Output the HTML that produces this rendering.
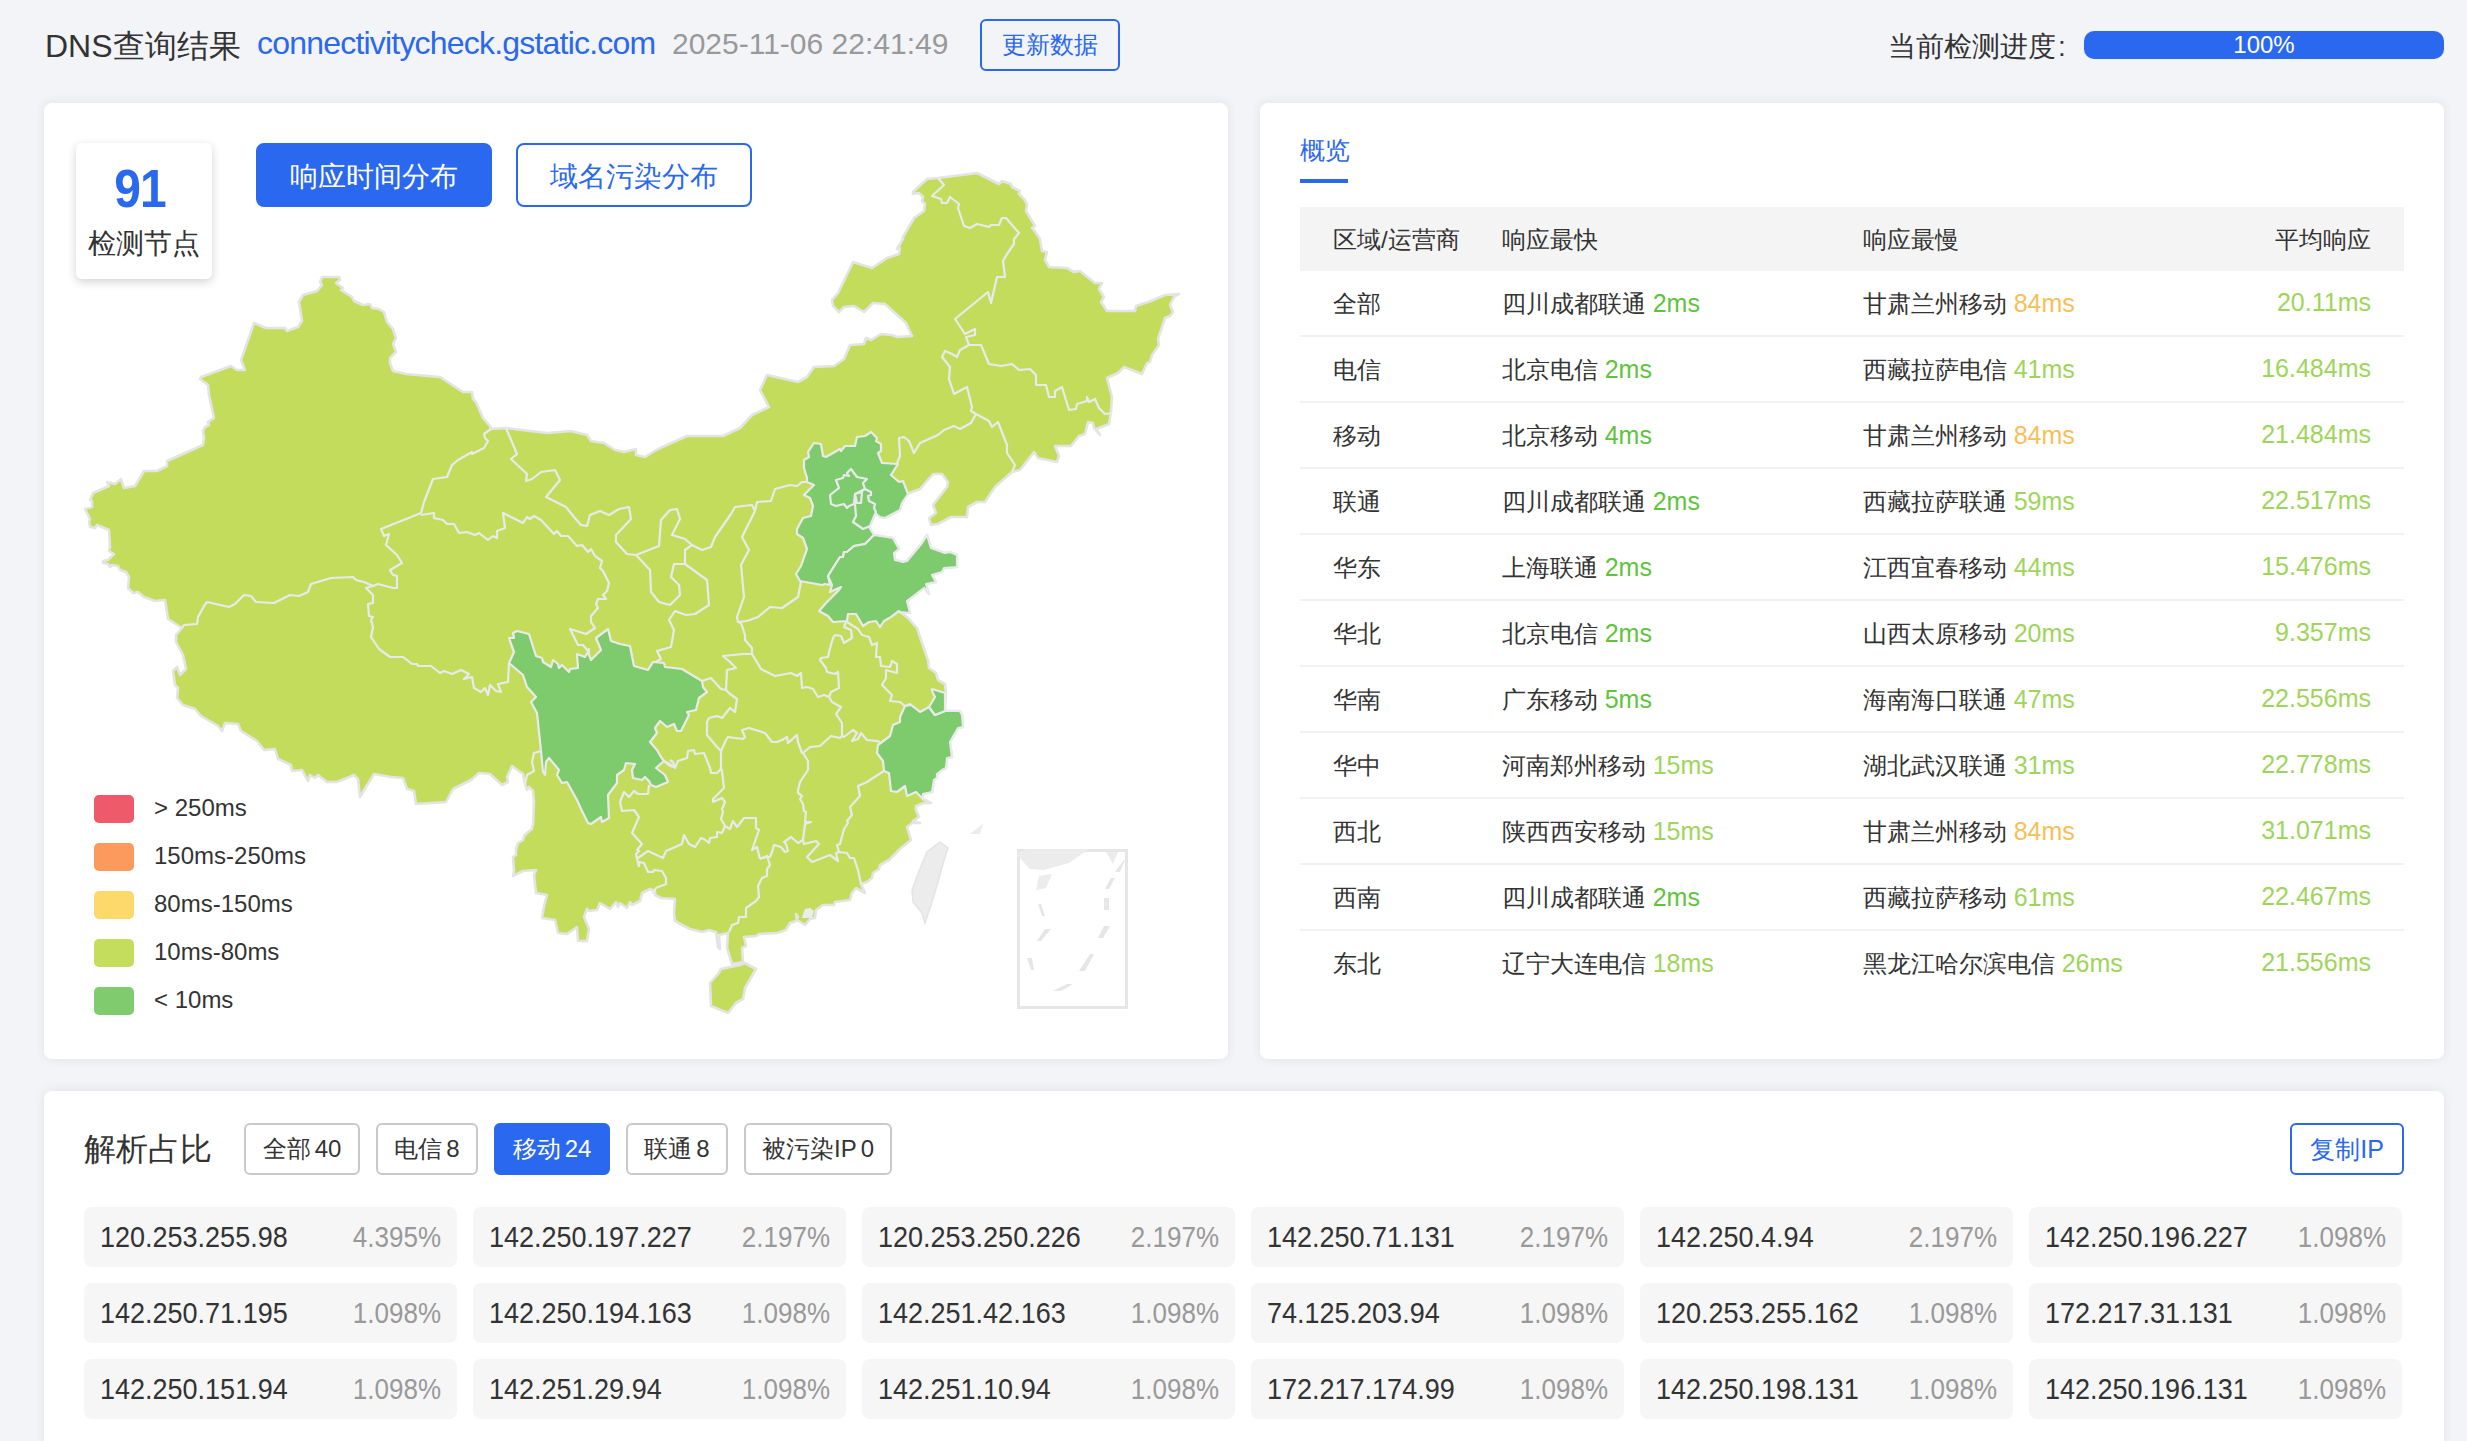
<!DOCTYPE html>
<html><head><meta charset="utf-8">
<style>
*{box-sizing:border-box;margin:0;padding:0}
html,body{width:2467px;height:1441px;overflow:hidden;background:#f3f4f8;font-family:"Liberation Sans",sans-serif;color:#333}
.a{position:absolute;white-space:nowrap}
.card{position:absolute;background:#fff;border-radius:8px;box-shadow:0 0 12px rgba(0,0,0,0.075)}
.blue{color:#2a68ef}
.btn{position:absolute;border:2px solid #2a68ef;border-radius:6px;color:#2a68ef;display:flex;align-items:center;justify-content:center;white-space:nowrap}
.btnf{background:#2a68ef;color:#fff}
.tag{position:absolute;top:1123px;height:52px;border:2px solid #c9c9c9;border-radius:6px;font-size:24px;display:flex;align-items:center;justify-content:center;color:#333;white-space:nowrap}
.tag.on{background:#2a68ef;border-color:#2a68ef;color:#fff}
.ip{position:absolute;width:373px;height:60px;background:#f6f6f6;border-radius:8px}
.ip .l{position:absolute;left:16px;top:15px;font-size:27px;color:#333;white-space:nowrap;transform:scaleY(1.12)}
.ip .r{position:absolute;right:16px;top:15px;font-size:26px;color:#999;white-space:nowrap;transform:scaleY(1.12)}
.row{position:absolute;left:1300px;width:1104px;height:66px;border-bottom:2px solid #f2f2f2}
.row span{position:absolute;top:17px;font-size:24px;white-space:nowrap}
.row b,.row .g2n{font-weight:normal;font-size:25px}
.g1{color:#5ec43c}.g2{color:#9ed55a}.o1{color:#f7c057}
.leg{position:absolute;left:94px;width:40px;height:28px;border-radius:5px}
.legt{position:absolute;left:154px;font-size:24px;color:#333;white-space:nowrap}
</style></head><body>
<!-- header -->
<div class="a" style="left:45px;top:25px;font-size:32px;color:#333">DNS查询结果</div>
<div class="a blue" style="left:257px;top:25px;font-size:32px;letter-spacing:-0.8px">connectivitycheck.gstatic.com</div>
<div class="a" style="left:672px;top:27px;font-size:30px;color:#999">2025-11-06 22:41:49</div>
<div class="btn" style="left:980px;top:19px;width:140px;height:52px;font-size:24px">更新数据</div>
<div class="a" style="left:1888px;top:28px;font-size:28px;color:#333">当前检测进度<span style="margin-left:2px">:</span></div>
<div class="a" style="left:2084px;top:31px;width:360px;height:28px;border-radius:10px;background:#2a68ef;color:#fff;font-size:24px;text-align:center;line-height:28px">100%</div>

<!-- left card -->
<div class="card" style="left:44px;top:103px;width:1184px;height:956px"></div>
<div class="card" style="left:76px;top:143px;width:136px;height:136px;border-radius:6px;box-shadow:0 3px 10px rgba(0,0,0,0.18)"></div>
<div class="a" style="left:72px;top:161px;width:136px;text-align:center;font-size:48px;font-weight:bold;color:#2a68ef;letter-spacing:-1px;transform:scaleY(1.1)">91</div>
<div class="a" style="left:76px;top:225px;width:136px;text-align:center;font-size:28px;color:#333">检测节点</div>
<div class="btn btnf" style="left:256px;top:143px;width:236px;height:64px;font-size:28px;border-radius:8px;padding-top:3px">响应时间分布</div>
<div class="btn" style="left:516px;top:143px;width:236px;height:64px;font-size:28px;border-radius:8px;padding-top:3px">域名污染分布</div>

<!-- MAP -->
<svg id="map" class="a" style="left:0;top:0" width="1240" height="1060" viewBox="0 0 1240 1060">
<polygon points="322,277 339,277 340,280 336,283 343,288 341,290 352,297 354,301 363,305 370,304 372,308 379,309 384,312 387,322 393,329 396,338 393,344 396,352 390,358 390,363 393,371 406,374 440,377 463,392 472,392 473,399 476,402 483,418 490,426 491,429 506,428 547,433 571,431 587,435 591,441 604,443 615,450 624,452 636,449 636,455 645,457 658,449 687,436 723,436 740,428 752,415 769,407 760,390 767,375 798,382 807,377 814,367 834,366 844,359 850,345 864,344 866,338 871,340 881,334 892,335 897,337 912,336 906,323 885,304 873,303 864,312 854,306 844,307 839,312 833,306 832,300 838,293 853,262 872,268 887,258 899,254 900,248 897,249 903,239 903,237 914,218 924,211 925,204 922,201 923,197 919,193 913,194 913,192 927,179 938,178 977,173 999,184 1002,181 1011,184 1012,187 1020,191 1019,194 1024,199 1027,204 1026,211 1035,226 1032,228 1034,230 1040,239 1042,251 1047,252 1045,260 1049,267 1067,268 1074,272 1080,271 1095,283 1102,283 1099,289 1104,297 1101,302 1107,311 1135,311 1136,306 1151,301 1165,295 1179,294 1174,297 1170,305 1173,312 1170,316 1165,318 1158,339 1159,345 1152,355 1150,362 1147,363 1142,374 1124,367 1118,373 1107,378 1112,397 1111,412 1109,424 1096,429 1100,435 1094,428 1093,423 1088,422 1085,434 1079,436 1071,446 1055,446 1059,456 1057,462 1038,458 1034,452 1020,470 1012,472 995,487 985,502 977,502 968,507 967,517 951,517 938,524 931,525 929,518 936,513 933,505 947,487 948,482 942,474 933,474 920,489 907,494 902,503 900,510 885,518 880,517 875,513 869,527 874,535 893,538 899,549 894,553 895,560 903,562 907,561 922,543 927,535 931,548 945,553 950,552 957,555 957,567 944,568 942,572 932,575 936,582 926,584 929,594 924,588 907,601 910,613 900,612 908,618 917,628 921,640 928,660 929,668 936,673 938,680 945,684 946,693 945,706 945,711 960,711 962,715 963,727 958,728 950,742 952,757 947,758 946,768 942,770 937,774 937,778 934,780 932,792 923,794 923,799 931,803 924,803 916,806 916,810 919,817 913,821 920,823 912,823 907,827 911,840 901,848 889,860 880,865 879,869 873,873 872,878 867,882 861,884 865,893 856,888 852,893 850,900 835,902 834,905 823,905 816,910 815,918 810,919 805,925 797,920 796,914 798,917 796,921 790,923 786,930 777,933 759,934 756,936 744,937 746,946 742,948 743,962 732,964 727,948 728,933 719,935 720,949 718,947 716,932 709,930 702,932 690,929 682,925 675,921 674,913 675,899 661,898 655,895 655,891 650,889 642,893 640,901 632,905 630,902 627,908 620,903 618,907 616,902 610,909 600,903 597,910 589,911 587,909 584,917 589,929 587,941 578,941 577,927 567,934 558,933 555,920 542,918 544,906 547,895 536,893 534,875 536,870 523,871 513,876 514,871 513,857 516,855 516,849 518,843 523,840 524,836 528,832 532,829 532,827 533,825 534,802 533,791 529,787 527,790 525,784 523,774 512,766 507,777 508,782 502,785 490,774 479,773 471,780 453,789 446,802 416,804 414,791 407,789 403,778 391,777 374,774 364,790 360,797 358,779 354,775 337,782 327,782 318,775 315,778 310,775 308,781 302,770 292,771 291,765 278,759 275,749 264,750 257,741 241,731 238,724 225,723 222,731 218,726 201,716 195,709 183,705 177,698 178,688 175,685 173,671 177,667 180,675 186,669 183,655 176,642 176,635 182,628 168,619 165,600 155,601 144,597 138,592 133,593 128,588 129,577 126,572 120,570 118,566 112,565 110,567 108,564 103,563 103,561 108,560 114,554 109,551 110,547 109,530 97,525 95,528 90,527 89,522 90,519 85,509 92,507 92,501 90,500 93,493 109,486 107,482 115,484 121,479 124,488 135,486 144,471 157,471 167,466 167,461 203,445 204,438 203,431 205,427 209,425 208,422 214,418 209,395 208,385 200,379 201,377 231,366 237,370 245,370 241,360 254,323 266,328 285,328 287,331 298,327 302,321 299,302 303,295 317,291 322,285 320,282" fill="#c4dc5c" stroke="#e4e4e4" stroke-width="2.6" stroke-linejoin="round"/>
<polygon points="721,969 740,965 745,963 756,969 745,988 743,999 736,1003 728,1013 711,1006 710,983 718,974" fill="#c4dc5c" stroke="#e4e4e4" stroke-width="2.6" stroke-linejoin="round"/>
<polyline points="491,429 484,434 485,438 488,441 484,448 472,454 472,452 458,460 452,465 447,477 433,479 424,502 421,513 381,529 384,536 389,534 386,545 397,555 402,563 390,570 393,575 397,576 397,588 393,588 378,584 373,586 364,582 356,580 353,577 331,578 311,584 308,592 299,596 290,595 274,603 256,602 251,596 244,595 235,604 229,607 207,602 204,606 198,617 197,624 184,625 182,628" fill="none" stroke="#eaeaee" stroke-width="2.2" stroke-linejoin="round"/>
<polyline points="421,515 434,513 434,518 443,520 447,524 454,524 459,533 467,532 475,535 479,533 488,540 493,536 497,538 497,531 505,528 503,513 523,523 527,517 530,519 534,516 541,520 554,534 557,531 561,536 568,536 577,546 582,545 588,552 591,549 595,556 602,561 600,568 603,571 609,583 607,591 603,595 606,599 598,599 596,604 598,608 591,616 591,622 595,628 586,634 570,629 578,645 583,645 588,651 589,649 588,659" fill="none" stroke="#eaeaee" stroke-width="2.2" stroke-linejoin="round"/>
<polyline points="373,586 366,588 373,595 373,603 368,604 369,616 373,617 371,620 373,627 371,637 379,649 390,657 403,657 412,664 417,664 418,666 431,666 440,673 444,671 452,674 461,670 469,674 464,679 472,677 474,688 481,692 485,688 488,695 490,685 496,691 501,692 498,684 508,682 509,663" fill="none" stroke="#eaeaee" stroke-width="2.2" stroke-linejoin="round"/>
<polyline points="506,428 517,454 511,459 527,474 526,481 532,479 541,472 555,470 560,480 546,497 566,507 574,517 581,525 587,526 590,515 600,511 609,515 619,509 629,507 631,519 616,535 616,542 627,554 636,555" fill="none" stroke="#eaeaee" stroke-width="2.2" stroke-linejoin="round"/>
<polyline points="636,555 659,546 661,520 670,510 677,509 680,519 672,535 685,539 692,545 685,550 685,564 674,564 671,577 679,585 680,595 670,605 659,602 651,592 650,570 636,555" fill="none" stroke="#eaeaee" stroke-width="2.2" stroke-linejoin="round"/>
<polyline points="692,545 702,550 711,547 715,537 731,514 735,507 752,505 755,511 757,502 771,501 775,489 790,485 797,486 802,482 806,482" fill="none" stroke="#eaeaee" stroke-width="2.2" stroke-linejoin="round"/>
<polyline points="685,564 707,580 709,605 695,614 686,615 675,611 669,620 674,630 671,647 657,651 661,659 652,664 648,670" fill="none" stroke="#eaeaee" stroke-width="2.2" stroke-linejoin="round"/>
<polyline points="755,511 742,537 749,550 741,565 744,597 737,617 738,622 741,623 745,635 745,640 752,648 752,654" fill="none" stroke="#eaeaee" stroke-width="2.2" stroke-linejoin="round"/>
<polyline points="752,654 743,654 733,655 723,656 730,662 736,668 727,670 726,690" fill="none" stroke="#eaeaee" stroke-width="2.2" stroke-linejoin="round"/>
<polyline points="702,681 711,678 721,689 726,690" fill="none" stroke="#eaeaee" stroke-width="2.2" stroke-linejoin="round"/>
<polyline points="726,690 730,694 737,699 735,712 730,708 722,718 717,716 709,718 707,722 707,735 717,747 721,751" fill="none" stroke="#eaeaee" stroke-width="2.2" stroke-linejoin="round"/>
<polyline points="721,751 721,769 722,771 724,788 713,799 713,802 722,798 725,802 722,809 723,812 721,819 725,826" fill="none" stroke="#eaeaee" stroke-width="2.2" stroke-linejoin="round"/>
<polyline points="721,769 717,773 711,773 710,768 704,753 695,754 694,750 688,751 687,758 678,761 675,768 673,762 670,760" fill="none" stroke="#eaeaee" stroke-width="2.2" stroke-linejoin="round"/>
<polyline points="649,785 648,794 638,794 634,791 629,797 624,792 620,802 622,811 634,810 639,817 632,833 642,844 637,850 639,851 636,854 639,867" fill="none" stroke="#eaeaee" stroke-width="2.2" stroke-linejoin="round"/>
<polyline points="639,867 639,862 644,863 648,872 653,872 654,870 662,871 666,878 666,884 656,888 654,891 652,894" fill="none" stroke="#eaeaee" stroke-width="2.2" stroke-linejoin="round"/>
<polyline points="638,858 648,851 663,858 666,851 682,844 684,835 689,844 695,847 701,838 704,839 709,843 710,838 717,837 717,832 722,833 725,826" fill="none" stroke="#eaeaee" stroke-width="2.2" stroke-linejoin="round"/>
<polyline points="725,826 730,829 733,821 737,827 744,818 756,818 756,828 759,830 752,850 757,847 760,859" fill="none" stroke="#eaeaee" stroke-width="2.2" stroke-linejoin="round"/>
<polyline points="760,859 767,856 770,865 767,869 767,876 762,878 758,886 759,897 756,901 746,908 746,917 739,917 738,923 732,925 729,932" fill="none" stroke="#eaeaee" stroke-width="2.2" stroke-linejoin="round"/>
<polyline points="761,858 767,857 770,857 772,852 774,845 781,847 785,852 788,851 786,844 784,842 791,837 798,843 803,840" fill="none" stroke="#eaeaee" stroke-width="2.2" stroke-linejoin="round"/>
<polyline points="803,840 804,844 816,841 819,844 807,857 812,862 830,855 838,861 836,853 839,852 847,853 850,858 854,858 858,870 861,884" fill="none" stroke="#eaeaee" stroke-width="2.2" stroke-linejoin="round"/>
<polyline points="803,753 808,761 808,770 800,782 798,790 798,793 802,796 800,799 803,804 804,811 806,812 805,822 811,822 805,824 803,840" fill="none" stroke="#eaeaee" stroke-width="2.2" stroke-linejoin="round"/>
<polyline points="721,751 726,740 728,737 743,739 745,737 742,730 749,728 765,733 772,742 777,742 782,740 787,737 788,743 797,735 798,742 802,753 803,753" fill="none" stroke="#eaeaee" stroke-width="2.2" stroke-linejoin="round"/>
<polyline points="842,736 840,738 831,736 820,746 810,747 803,753" fill="none" stroke="#eaeaee" stroke-width="2.2" stroke-linejoin="round"/>
<polyline points="842,736 842,723 836,714 841,707 832,702 829,697" fill="none" stroke="#eaeaee" stroke-width="2.2" stroke-linejoin="round"/>
<polyline points="752,654 761,669 775,676 791,673 797,676 801,673 802,688 807,687 813,689 818,697 824,695 829,697" fill="none" stroke="#eaeaee" stroke-width="2.2" stroke-linejoin="round"/>
<polyline points="738,622 747,621 758,617 770,607 782,608 798,597 801,582" fill="none" stroke="#eaeaee" stroke-width="2.2" stroke-linejoin="round"/>
<polyline points="846,622 844,627 851,630 852,638 844,643 841,636 835,635 833,638 830,648 828,657 821,658 820,660 826,668 827,672 835,674 838,672 839,688 831,692 829,697" fill="none" stroke="#eaeaee" stroke-width="2.2" stroke-linejoin="round"/>
<polyline points="847,622 858,629 862,635 869,637 872,645 877,643 876,657 880,657 881,666 890,667 892,661 897,664 897,673 886,670 886,678 882,685 892,695 890,701 900,702 905,706 910,704 921,713 929,708" fill="none" stroke="#eaeaee" stroke-width="2.2" stroke-linejoin="round"/>
<polyline points="880,742 877,741 867,740 861,733 858,739 852,741 857,733 853,730 844,737 842,736" fill="none" stroke="#eaeaee" stroke-width="2.2" stroke-linejoin="round"/>
<polyline points="884,771 873,778 867,782 858,786 860,796 850,807 852,815 847,821 848,823 844,829 840,844 837,845 839,852" fill="none" stroke="#eaeaee" stroke-width="2.2" stroke-linejoin="round"/>
<polyline points="938,178 944,185 932,196 941,199 942,203 947,203 950,197 959,204 958,208 964,226 970,228 977,224 989,227 991,225 999,225 1002,218 1006,218 1019,233 1014,239 1014,244 1007,254 1003,261 1005,277 997,277 991,303 988,292 955,319 965,334 975,329 975,335 966,337 969,345" fill="none" stroke="#eaeaee" stroke-width="2.2" stroke-linejoin="round"/>
<polyline points="969,345 960,350 957,357 952,354 945,351 942,357 950,367 949,379 954,394 967,387 972,407 971,411 976,414" fill="none" stroke="#eaeaee" stroke-width="2.2" stroke-linejoin="round"/>
<polyline points="969,345 981,345 989,364 1001,366 1012,364 1019,370 1030,369 1036,375 1036,385 1046,385 1049,397 1055,397 1055,391 1062,387 1069,410 1076,409 1077,404 1087,401 1087,397 1089,402 1095,399 1099,408 1105,414 1112,413" fill="none" stroke="#eaeaee" stroke-width="2.2" stroke-linejoin="round"/>
<polyline points="897,463 900,456 899,438 904,437 909,441 914,453 920,443 938,435 944,430 954,426 960,429 971,423 976,414" fill="none" stroke="#eaeaee" stroke-width="2.2" stroke-linejoin="round"/>
<polyline points="976,414 989,421 992,427 998,422 1007,445 1007,453 1015,465 1012,472" fill="none" stroke="#eaeaee" stroke-width="2.2" stroke-linejoin="round"/>
<polyline points="541,751 534,753 532,762 534,771 527,775 525,784" fill="none" stroke="#eaeaee" stroke-width="2.2" stroke-linejoin="round"/>
<polygon points="808,452 814,443 821,444 823,456 826,457 840,449 841,451 845,446 855,446 857,437 865,436 871,432 877,438 876,441 881,444 881,451 878,453 882,463 898,464 891,475 899,482 903,481 908,494 902,503 900,510 885,518 880,517 875,513 869,527 874,535 865,544 854,546 847,552 844,552 843,557 840,557 828,576 830,585 825,584 822,585 800,581 796,574 801,566 807,549 803,538 797,534 797,529 803,518 811,516 813,506 810,498 804,495 814,485 807,482 807,478 804,468 804,460 809,457" fill="#7ecb6e" stroke="#eaeaee" stroke-width="2.2" stroke-linejoin="round"/>
<polygon points="874,535 893,538 899,549 894,553 895,560 903,562 907,561 922,543 927,535 931,548 945,553 950,552 957,555 957,567 944,568 942,572 932,575 936,582 926,584 929,594 924,588 907,601 910,613 900,612 899,611 891,617 884,621 880,627 876,621 869,622 863,626 856,614 848,614 847,621 833,622 828,616 819,611 827,602 838,591 841,587 830,592 832,585 828,576 840,557 843,557 844,552 847,552 854,546 865,544" fill="#7ecb6e" stroke="#eaeaee" stroke-width="2.2" stroke-linejoin="round"/>
<polygon points="509,638 514,638 513,633 517,631 529,634 536,656 542,658 543,662 551,667 553,660 558,664 559,668 562,665 569,672 570,669 578,668 577,654 585,657 588,652 591,660 601,650 596,638 608,629 611,641 620,644 630,646 634,666 648,670 653,662 664,663 665,667 682,669 687,672 702,681 703,687 707,692 699,698 696,710 687,712 689,715 681,731 677,731 674,724 667,727 660,721 655,728 657,733 650,742 657,750 661,757 664,761 670,766 674,767 668,763 664,761 656,768 665,775 668,782 656,787 651,785 649,781 645,777 642,780 633,778 632,770 635,764 626,763 624,770 617,775 617,783 608,795 609,818 602,822 601,817 591,824 588,823 582,811 577,800 567,782 562,783 557,775 559,770 549,758 546,762 545,775 543,772 541,751 537,713 531,702 536,697 527,687 523,675 509,663 514,652 510,641" fill="#7ecb6e" stroke="#eaeaee" stroke-width="2.2" stroke-linejoin="round"/>
<polygon points="878,745 890,736 893,725 900,722 900,717 905,706 911,705 920,712 929,707 935,715 945,711 960,711 962,715 963,727 958,728 950,742 952,757 947,758 946,768 942,770 937,774 937,778 934,780 932,792 923,794 923,799 916,792 907,796 905,786 897,792 891,791 889,773 884,771 883,761 877,753" fill="#7ecb6e" stroke="#eaeaee" stroke-width="2.2" stroke-linejoin="round"/>
<polygon points="932,689 945,693 945,706 945,711 935,715 929,707 935,697 932,691" fill="#7ecb6e" stroke="#eaeaee" stroke-width="2.2" stroke-linejoin="round"/>
<polygon points="851,469 857,477 867,479 863,483 865,489 855,494 854,504 849,506 847,508 844,504 836,506 831,504 830,495 839,488 836,480 843,478 844,475 849,476 847,473" fill="#7ecb6e" stroke="#eaeaee" stroke-width="2.2" stroke-linejoin="round"/>
<polygon points="865,489 871,492 871,495 868,496 869,501 875,504 874,508 876,512 870,526 863,529 853,522 856,516 855,504 855,495" fill="#7ecb6e" stroke="#eaeaee" stroke-width="2.2" stroke-linejoin="round"/>
<polygon points="855,494 862,492 861,503 857,503" fill="#7ecb6e" stroke="#eaeaee" stroke-width="2.2" stroke-linejoin="round"/>
<polygon points="940,842 948,848 945,857 938,882 931,905 925,923 922,913 913,902 912,890 919,871 927,852" fill="#ececec" stroke="#e4e4e4" stroke-width="1.5"/>
<polygon points="803,914 805,909 810,908 814,911 812,918 802,918" fill="#ececec"/>
<polygon points="970,834 983,824 980,834" fill="#ececec"/>
<rect x="1018.5" y="850.5" width="108" height="157" fill="none" stroke="#e6e6e6" stroke-width="3"/>
<polygon points="1017,855 1026,849 1089,849 1069,863 1044,870 1030,869 1019,857" fill="#ececec"/>
<polygon points="1106,852 1118,852 1113,864" fill="#ececec"/>
<polygon points="1039,876 1052,874 1046,888 1036,890" fill="#ececec"/>
<polygon points="1038,904 1041,904 1045,916 1042,916" fill="#e6e6e6"/>
<polygon points="1045,929 1051,929 1041,941 1037,941" fill="#e6e6e6"/>
<polygon points="1027,958 1032,958 1034,970 1031,970" fill="#e6e6e6"/>
<polygon points="1053,991 1067,984 1073,984 1061,991" fill="#e6e6e6"/>
<polygon points="1079,971 1085,971 1094,954 1090,954" fill="#e6e6e6"/>
<polygon points="1098,938 1103,938 1110,926 1104,926" fill="#e6e6e6"/>
<polygon points="1104,898 1109,898 1109,910 1104,910" fill="#e6e6e6"/>
<polygon points="1105,889 1109,889 1115,878 1111,878" fill="#e6e6e6"/>
<polygon points="1115,872 1120,872 1125,860 1124,860" fill="#e6e6e6"/>
</svg>

<!-- legend -->
<div class="leg" style="top:795px;background:#ee5a6a"></div><div class="legt" style="top:794px">&gt; 250ms</div>
<div class="leg" style="top:843px;background:#fc9a5e"></div><div class="legt" style="top:842px">150ms-250ms</div>
<div class="leg" style="top:891px;background:#fdd86b"></div><div class="legt" style="top:890px">80ms-150ms</div>
<div class="leg" style="top:939px;background:#c4dd5c"></div><div class="legt" style="top:938px">10ms-80ms</div>
<div class="leg" style="top:987px;background:#7fcb6e"></div><div class="legt" style="top:986px">&lt; 10ms</div>

<!-- right card -->
<div class="card" style="left:1260px;top:103px;width:1184px;height:956px"></div>
<div class="a blue" style="left:1300px;top:134px;font-size:25px">概览</div>
<div class="a" style="left:1300px;top:179px;width:48px;height:4px;background:#2a68ef"></div>
<div class="a" style="left:1300px;top:207px;width:1104px;height:64px;background:#f4f4f5"></div>
<div class="a" style="left:1333px;top:224px;font-size:24px">区域/运营商</div>
<div class="a" style="left:1502px;top:224px;font-size:24px">响应最快</div>
<div class="a" style="left:1863px;top:224px;font-size:24px">响应最慢</div>
<div class="a" style="left:2271px;top:224px;width:100px;text-align:right;font-size:24px">平均响应</div>
<div id="rows">
<div class="row" style="top:271px;"><span style="left:33px">全部</span><span style="left:202px">四川成都联通 <b class="g1">2ms</b></span><span style="left:563px">甘肃兰州移动 <b class="o1">84ms</b></span><span class="g2" style="right:33px;font-size:25px">20.11ms</span></div>
<div class="row" style="top:337px;"><span style="left:33px">电信</span><span style="left:202px">北京电信 <b class="g1">2ms</b></span><span style="left:563px">西藏拉萨电信 <b class="g2">41ms</b></span><span class="g2" style="right:33px;font-size:25px">16.484ms</span></div>
<div class="row" style="top:403px;"><span style="left:33px">移动</span><span style="left:202px">北京移动 <b class="g1">4ms</b></span><span style="left:563px">甘肃兰州移动 <b class="o1">84ms</b></span><span class="g2" style="right:33px;font-size:25px">21.484ms</span></div>
<div class="row" style="top:469px;"><span style="left:33px">联通</span><span style="left:202px">四川成都联通 <b class="g1">2ms</b></span><span style="left:563px">西藏拉萨联通 <b class="g2">59ms</b></span><span class="g2" style="right:33px;font-size:25px">22.517ms</span></div>
<div class="row" style="top:535px;"><span style="left:33px">华东</span><span style="left:202px">上海联通 <b class="g1">2ms</b></span><span style="left:563px">江西宜春移动 <b class="g2">44ms</b></span><span class="g2" style="right:33px;font-size:25px">15.476ms</span></div>
<div class="row" style="top:601px;"><span style="left:33px">华北</span><span style="left:202px">北京电信 <b class="g1">2ms</b></span><span style="left:563px">山西太原移动 <b class="g2">20ms</b></span><span class="g2" style="right:33px;font-size:25px">9.357ms</span></div>
<div class="row" style="top:667px;"><span style="left:33px">华南</span><span style="left:202px">广东移动 <b class="g1">5ms</b></span><span style="left:563px">海南海口联通 <b class="g2">47ms</b></span><span class="g2" style="right:33px;font-size:25px">22.556ms</span></div>
<div class="row" style="top:733px;"><span style="left:33px">华中</span><span style="left:202px">河南郑州移动 <b class="g2">15ms</b></span><span style="left:563px">湖北武汉联通 <b class="g2">31ms</b></span><span class="g2" style="right:33px;font-size:25px">22.778ms</span></div>
<div class="row" style="top:799px;"><span style="left:33px">西北</span><span style="left:202px">陕西西安移动 <b class="g2">15ms</b></span><span style="left:563px">甘肃兰州移动 <b class="o1">84ms</b></span><span class="g2" style="right:33px;font-size:25px">31.071ms</span></div>
<div class="row" style="top:865px;"><span style="left:33px">西南</span><span style="left:202px">四川成都联通 <b class="g1">2ms</b></span><span style="left:563px">西藏拉萨移动 <b class="g2">61ms</b></span><span class="g2" style="right:33px;font-size:25px">22.467ms</span></div>
<div class="row" style="top:931px;border-bottom:none;"><span style="left:33px">东北</span><span style="left:202px">辽宁大连电信 <b class="g2">18ms</b></span><span style="left:563px">黑龙江哈尔滨电信 <b class="g2">26ms</b></span><span class="g2" style="right:33px;font-size:25px">21.556ms</span></div>
</div>

<!-- bottom card -->
<div class="card" style="left:44px;top:1091px;width:2400px;height:400px"></div>
<div class="a" style="left:84px;top:1128px;font-size:32px;color:#333">解析占比</div>
<div class="tag" style="left:244px;width:116px">全部<span style="margin-left:4px">40</span></div>
<div class="tag" style="left:376px;width:102px">电信<span style="margin-left:4px">8</span></div>
<div class="tag on" style="left:494px;width:116px">移动<span style="margin-left:4px">24</span></div>
<div class="tag" style="left:626px;width:102px">联通<span style="margin-left:4px">8</span></div>
<div class="tag" style="left:744px;width:148px">被污染IP<span style="margin-left:4px">0</span></div>
<div class="btn" style="left:2290px;top:1123px;width:114px;height:52px;font-size:25px">复制IP</div>
<div id="ips">
<div class="ip" style="left:84px;top:1207px"><span class="l">120.253.255.98</span><span class="r">4.395%</span></div>
<div class="ip" style="left:473px;top:1207px"><span class="l">142.250.197.227</span><span class="r">2.197%</span></div>
<div class="ip" style="left:862px;top:1207px"><span class="l">120.253.250.226</span><span class="r">2.197%</span></div>
<div class="ip" style="left:1251px;top:1207px"><span class="l">142.250.71.131</span><span class="r">2.197%</span></div>
<div class="ip" style="left:1640px;top:1207px"><span class="l">142.250.4.94</span><span class="r">2.197%</span></div>
<div class="ip" style="left:2029px;top:1207px"><span class="l">142.250.196.227</span><span class="r">1.098%</span></div>
<div class="ip" style="left:84px;top:1283px"><span class="l">142.250.71.195</span><span class="r">1.098%</span></div>
<div class="ip" style="left:473px;top:1283px"><span class="l">142.250.194.163</span><span class="r">1.098%</span></div>
<div class="ip" style="left:862px;top:1283px"><span class="l">142.251.42.163</span><span class="r">1.098%</span></div>
<div class="ip" style="left:1251px;top:1283px"><span class="l">74.125.203.94</span><span class="r">1.098%</span></div>
<div class="ip" style="left:1640px;top:1283px"><span class="l">120.253.255.162</span><span class="r">1.098%</span></div>
<div class="ip" style="left:2029px;top:1283px"><span class="l">172.217.31.131</span><span class="r">1.098%</span></div>
<div class="ip" style="left:84px;top:1359px"><span class="l">142.250.151.94</span><span class="r">1.098%</span></div>
<div class="ip" style="left:473px;top:1359px"><span class="l">142.251.29.94</span><span class="r">1.098%</span></div>
<div class="ip" style="left:862px;top:1359px"><span class="l">142.251.10.94</span><span class="r">1.098%</span></div>
<div class="ip" style="left:1251px;top:1359px"><span class="l">172.217.174.99</span><span class="r">1.098%</span></div>
<div class="ip" style="left:1640px;top:1359px"><span class="l">142.250.198.131</span><span class="r">1.098%</span></div>
<div class="ip" style="left:2029px;top:1359px"><span class="l">142.250.196.131</span><span class="r">1.098%</span></div>
</div>
</body></html>
